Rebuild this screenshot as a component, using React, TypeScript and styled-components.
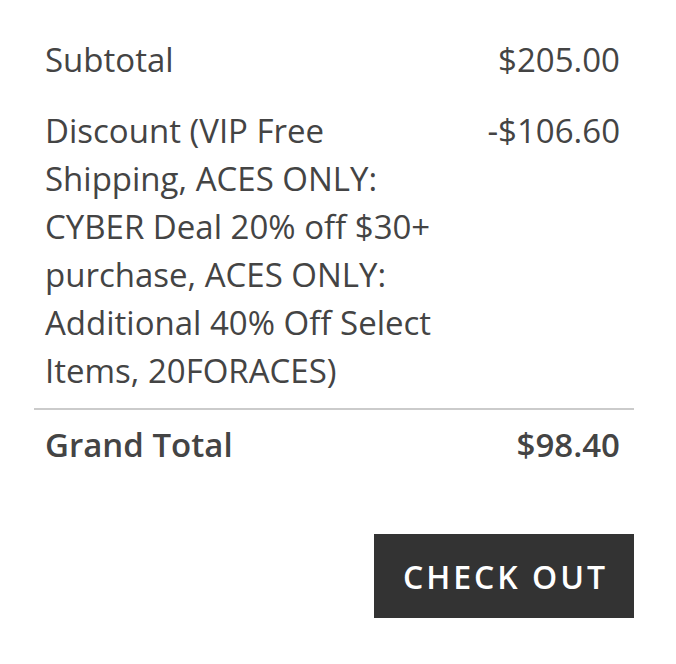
import React from "react";
import styled, { createGlobalStyle } from "styled-components";

const Global = createGlobalStyle`
  html, body { margin: 0; padding: 0; background: #fff; }
  body { font-family: "Open Sans", "Noto Sans", sans-serif; color: #444; }
`;

const Panel = styled.div`
  width: 600px;
  margin-left: 34px;
  padding-top: 36px;
  display: flex;
  flex-direction: column;
`;

const Row = styled.div<{ $bold?: boolean }>`
  display: flex;
  justify-content: space-between;
  align-items: flex-start;
  padding: 0 14px 0 11px;
  font-size: 33px;
  line-height: 48px;
  font-weight: ${(p) => (p.$bold ? 600 : 400)};
  & + & { margin-top: 23px; }
`;

const Label = styled.div`
  max-width: 402px;
`;

const Amount = styled.div`
  white-space: nowrap;
`;

const Divider = styled.hr`
  border: none;
  height: 2px;
  background: #cbcbcb;
  margin: 13px 0 11px;
`;

const Actions = styled.div`
  display: flex;
  justify-content: flex-end;
  margin-top: 65px;
`;

const CheckoutButton = styled.button`
  width: 260px;
  height: 84px;
  padding: 0 0 0 3px;
  background: #333;
  color: #fff;
  border: none;
  font-family: "Open Sans", sans-serif;
  font-size: 32px;
  font-weight: 600;
  letter-spacing: 3px;
  cursor: pointer;
`;

export default function App() {
  return (
    <>
      <Global />
      <Panel>
        <Row>
          <Label>Subtotal</Label>
          <Amount>$205.00</Amount>
        </Row>
        <Row>
          <Label>
            Discount (VIP Free Shipping, ACES ONLY: CYBER Deal 20% off $30+
            purchase, ACES ONLY: Additional 40% Off Select Items, 20FORACES)
          </Label>
          <Amount>-$106.60</Amount>
        </Row>
        <Divider />
        <Row $bold>
          <Label>Grand Total</Label>
          <Amount>$98.40</Amount>
        </Row>
        <Actions>
          <CheckoutButton>CHECK OUT</CheckoutButton>
        </Actions>
      </Panel>
    </>
  );
}
